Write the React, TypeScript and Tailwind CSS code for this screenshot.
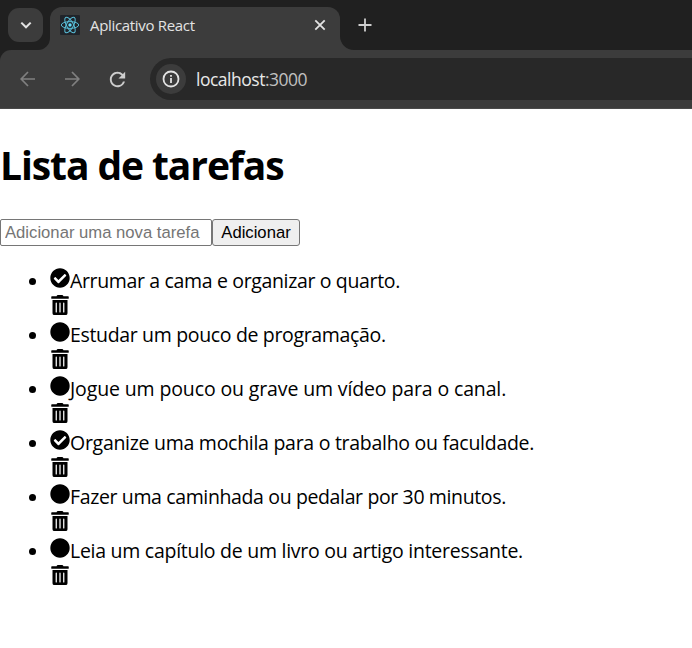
import { FaCheckCircle, FaCircle, FaTrashAlt } from "react-icons/fa";
import { MdRefresh } from "react-icons/md";

type Task = { text: string; done: boolean; tracking: string };

const tasks: Task[] = [
  { text: "Arrumar a cama e organizar o quarto.", done: true, tracking: "tracking-[-0.35px]" },
  { text: "Estudar um pouco de programação.", done: false, tracking: "tracking-[-0.34px]" },
  { text: "Jogue um pouco ou grave um vídeo para o canal.", done: false, tracking: "tracking-[-0.13px]" },
  { text: "Organize uma mochila para o trabalho ou faculdade.", done: true, tracking: "tracking-[-0.28px]" },
  { text: "Fazer uma caminhada ou pedalar por 30 minutos.", done: false, tracking: "tracking-[-0.37px]" },
  { text: "Leia um capítulo de um livro ou artigo interessante.", done: false, tracking: "tracking-[-0.27px]" },
];

function ReactLogo() {
  return (
    <svg viewBox="0 0 20 20" className="h-5 w-5 shrink-0">
      <rect width="20" height="20" rx="1" fill="#20242a" />
      <g fill="none" stroke="#58bcd6" strokeWidth="1">
        <ellipse cx="10" cy="10" rx="8.7" ry="3.4" />
        <ellipse cx="10" cy="10" rx="8.7" ry="3.4" transform="rotate(60 10 10)" />
        <ellipse cx="10" cy="10" rx="8.7" ry="3.4" transform="rotate(120 10 10)" />
      </g>
      <circle cx="10" cy="10" r="1.7" fill="#61dafb" />
    </svg>
  );
}

function TabStrip() {
  return (
    <div className="flex h-[50px] bg-[#202020]">
      <div className="mt-2 ml-2 flex h-[34px] w-[35px] items-center justify-center rounded-[11px] bg-[#3c3c3c]">
        <svg viewBox="0 0 12 12" className="h-3 w-3" fill="none" stroke="#e3e3e3" strokeWidth="2">
          <path d="M1.3 3.6 6 8.3l4.7-4.7" />
        </svg>
      </div>
      <svg viewBox="0 0 12 12" className="-ml-[5px] h-3 w-3 self-end" fill="#3c3c3c">
        <path d="M12 0v12H0A12 12 0 0 0 12 0z" />
      </svg>
      <div className="mt-[7px] flex h-[43px] w-[290px] items-start rounded-t-xl bg-[#3c3c3c] pt-2 pl-[10px]">
        <ReactLogo />
        <span className="-mt-px ml-[10px] w-[220px] text-[15px] leading-[22px] tracking-[-0.32px] text-[#e3e3e3]">
          <span className="inline-block whitespace-nowrap">Aplicativo React</span>
        </span>
        <svg viewBox="0 0 12 12" className="mt-1 ml-1 h-3 w-3 shrink-0" fill="none" stroke="#e3e3e3" strokeWidth="1.8">
          <path d="m1.3 1.3 9.4 9.4M10.7 1.3 1.3 10.7" />
        </svg>
      </div>
      <svg viewBox="0 0 14 14" className="h-[14px] w-[14px] self-end" fill="#3c3c3c">
        <path d="M0 0v14h14A14 14 0 0 1 0 0z" />
      </svg>
      <svg viewBox="0 0 14 14" className="mt-[18px] ml-1 h-[14px] w-[14px]" fill="none" stroke="#cfcfcf" strokeWidth="1.8">
        <path d="M7 .5v13M.5 7h13" />
      </svg>
    </div>
  );
}

function Toolbar() {
  return (
    <div className="bg-[#202020]">
      <div className="flex h-[59px] items-start rounded-tl-[11px] border-b border-[#4a4a4a] bg-[#3c3c3c] pt-2">
        <div className="flex h-[42px] w-[150px] items-center pl-5">
          <svg viewBox="0 0 16 16" className="h-4 w-4" fill="none" stroke="#808080" strokeWidth="1.7">
            <path d="M15 8H1.5M8 1 1.2 8 8 15" />
          </svg>
          <svg viewBox="0 0 16 16" className="ml-[28px] h-4 w-4" fill="none" stroke="#808080" strokeWidth="1.7">
            <path d="M1 8h13.5M8 1l6.8 7L8 15" />
          </svg>
          <MdRefresh size={23} color="#cdcdcd" className="ml-[26px]" />
        </div>
        <div className="flex h-[42px] flex-1 items-center rounded-l-full bg-[#282828] pl-[6px]">
          <div className="flex h-[30px] w-[30px] items-center justify-center rounded-full bg-[#3c3c3c]">
            <svg viewBox="0 0 18 18" className="h-[18px] w-[18px]" fill="none" stroke="#e3e3e3" strokeWidth="1.8">
              <circle cx="9" cy="9" r="7.5" />
              <path d="M9 8v5M9 5v1.8" />
            </svg>
          </div>
          <span className="ml-[10px] text-[17.5px] leading-6 tracking-[-0.49px] whitespace-nowrap text-[#e8e8e8]">
            localhost<span className="text-[#c0c0c0]">:3000</span>
          </span>
        </div>
      </div>
    </div>
  );
}

export default function App() {
  return (
    <div className="min-h-[648px] w-[692px] overflow-hidden bg-white font-['Open_Sans','Noto_Sans',sans-serif] text-black">
      <TabStrip />
      <Toolbar />
      <main>
        <h1 className="mt-[29px] text-[39px] leading-[54px] font-bold tracking-[-1.09px] whitespace-nowrap">
          <span className="inline-block">Lista de tarefas</span>
        </h1>
        <div className="mt-[27px] flex font-['Liberation_Sans',Arial,sans-serif] text-[16.67px]">
          <input
            placeholder="Adicionar uma nova tarefa"
            className="h-[27px] w-[212px] rounded-[2px] border border-[#767676] bg-white px-[4px] placeholder:text-[#757575]"
          />
          <button className="h-[27px] w-[88px] rounded-[3px] border border-[#767676] bg-[#efefef] whitespace-nowrap">Adicionar</button>
        </div>
        <ul className="mt-[21px] list-none">
          {tasks.map((task) => (
            <li key={task.text} className="flex h-[54px]">
              <span className="mt-[11px] ml-[29px] h-[7px] w-[7px] rounded-full bg-black" />
              <div className="ml-[14px]">
                <div className="flex h-[27px] items-start">
                  {task.done ? <FaCheckCircle size={20} className="mt-px" /> : <FaCircle size={20} className="mt-px" />}
                  <span className={`text-[19.5px] leading-7 whitespace-nowrap ${task.tracking}`}>{task.text}</span>
                </div>
                <FaTrashAlt size={20} className="mt-px" />
              </div>
            </li>
          ))}
        </ul>
      </main>
    </div>
  );
}
